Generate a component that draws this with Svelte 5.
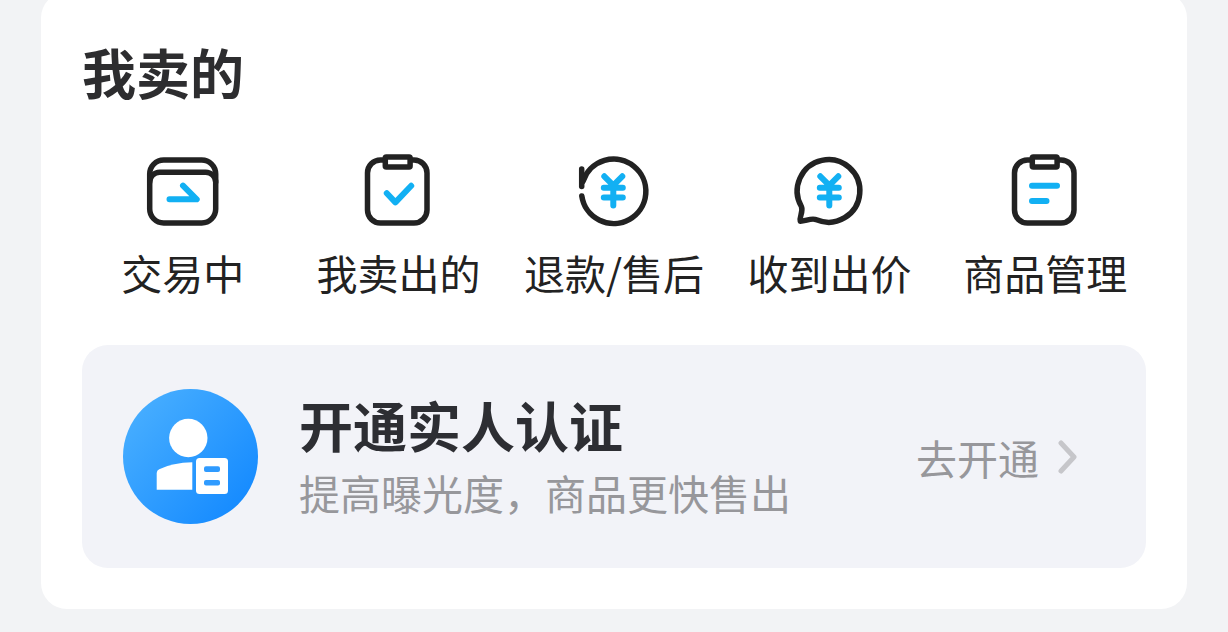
<script lang="ts">
  type IconName = 'wallet' | 'sold' | 'refund' | 'offer' | 'manage';

  interface Entry {
    icon: IconName;
    label: string;
  }

  const entries: Entry[] = [
    { icon: 'wallet', label: '交易中' },
    { icon: 'sold', label: '我卖出的' },
    { icon: 'refund', label: '退款/售后' },
    { icon: 'offer', label: '收到出价' },
    { icon: 'manage', label: '商品管理' },
  ];
</script>

{#snippet clipboard()}
  <rect x="9.5" y="10" width="59.5" height="63" rx="13" />
  <rect class="clip" x="27.300" y="7" width="24.800" height="10" rx="1" />
{/snippet}

{#snippet yen()}
  <path class="accent" d="M30.300 26.300l9 9 9-9M39.300 36v19.600M29.800 37.800h19M29.800 47.600h19" />
{/snippet}

<main class="page">
  <section class="card">
    <h2 class="card-title">我卖的</h2>

    <nav class="entries">
      {#each entries as entry (entry.icon)}
        <a class="entry" href="#{entry.icon}">
          <svg class="entry-icon" viewBox="0 0 80 80" aria-hidden="true">
            {#if entry.icon === 'wallet'}
              <rect x="6.7" y="10" width="66" height="63" rx="14" />
              <path d="M6.7 32a10 10 0 0 1 10-9.7h46a10 10 0 0 1 10 9.7" />
              <path class="accent" d="M40 35.700l13.700 13.600H26.500" />
            {:else if entry.icon === 'sold'}
              {@render clipboard()}
              <path class="accent" d="M28.8 43.2l8.6 9.2 15.8-16.6" />
            {:else if entry.icon === 'refund'}
              <path d="M7.8 46A32.2 32.2 0 1 0 9 31.5" />
              <path d="M7.7 19v17.5" />
              {@render yen()}
            {:else if entry.icon === 'offer'}
              <path d="M11.4 56.5A31.3 31.3 0 1 1 26.5 69.8C22 67.5 16 71 10.3 71.2C9 67 13.6 62 11.4 56.5z" />
              {@render yen()}
            {:else}
              {@render clipboard()}
              <path class="accent" d="M27 35.8h25M27 51h14.5" />
            {/if}
          </svg>
          <span class="entry-label">{entry.label}</span>
        </a>
      {/each}
    </nav>

    <a class="banner" href="#verify">
      <svg class="avatar" viewBox="0 0 135 135" aria-hidden="true">
        <defs>
          <linearGradient id="avatar-fill" x1="0.1" y1="0.15" x2="0.9" y2="0.85">
            <stop offset="0" stop-color="#46adff" />
            <stop offset="1" stop-color="#168bff" />
          </linearGradient>
        </defs>
        <circle cx="67.5" cy="67.5" r="67.5" fill="url(#avatar-fill)" />
        <g fill="#fff">
          <circle cx="65.3" cy="49" r="19.2" />
          <path d="M33.7 100.7V84q0-2.6 2.5-3.8Q50 73.6 69.3 73.3V100.7z" />
          <rect x="73" y="69" width="32" height="36" rx="3.5" />
        </g>
        <g fill="#2f9bff">
          <rect x="81" y="77.3" width="16" height="5.6" rx="2" />
          <rect x="81" y="91" width="16" height="5.6" rx="2" />
        </g>
      </svg>
      <div class="banner-text">
        <h3 class="banner-title">开通实人认证</h3>
        <p class="banner-desc">提高曝光度，商品更快售出</p>
      </div>
      <span class="banner-action">
        去开通
        <svg class="chevron" viewBox="0 0 20 36" aria-hidden="true">
          <path d="M4 4l13 14L4 32" />
        </svg>
      </span>
    </a>
  </section>
</main>

<style>
  :global(body) {
    background: #f2f3f5;
  }

  .page {
    display: flow-root;
    padding: 0 41px 24px;
    font-family: 'Noto Sans CJK SC', sans-serif;
    color: #222;
  }

  .card {
    margin-top: -8px;
    padding: 50px 0 41px;
    border-radius: 26px;
    background: #fff;
  }

  .card-title {
    margin: 0 41px;
    font-size: 54px;
    font-weight: 700;
    line-height: 60px;
    color: #2d2d2f;
  }

  .entries {
    display: grid;
    grid-template-columns: repeat(5, 1fr);
    margin: 48px 34px 0;
  }

  .entry {
    display: flex;
    flex-direction: column;
    align-items: center;
    gap: 12px;
    color: inherit;
    text-decoration: none;
  }

  .entry-icon {
    width: 80px;
    height: 80px;
    fill: none;
    stroke: #222;
    stroke-width: 5.5;
    stroke-linecap: round;
    stroke-linejoin: round;
  }

  .clip {
    fill: #fff;
  }

  .accent {
    stroke: #12b0f3;
    stroke-width: 6;
  }

  .entry-label {
    font-size: 41px;
    line-height: 60px;
    white-space: nowrap;
  }

  .banner {
    display: flex;
    align-items: flex-start;
    margin: 43px 41px 0;
    padding: 44px 69px 44px 41px;
    border-radius: 26px;
    background: #f2f3f8;
    color: #97979b;
    text-decoration: none;
  }

  .avatar {
    flex: none;
    width: 135px;
    height: 135px;
  }

  .banner-text {
    flex: 1;
    margin-left: 41px;
  }

  .banner-title {
    margin: 0;
    font-size: 54px;
    font-weight: 700;
    line-height: 72px;
    color: #2d2e33;
  }

  .banner-desc {
    margin: 0;
    font-size: 41px;
    line-height: 62px;
  }

  .banner-action {
    display: flex;
    align-items: center;
    align-self: center;
    gap: 18px;
    font-size: 41px;
    line-height: 60px;
  }

  .chevron {
    width: 20px;
    height: 36px;
    fill: none;
    stroke: #c6c6ca;
    stroke-width: 5;
    stroke-linecap: round;
    stroke-linejoin: round;
  }
</style>
